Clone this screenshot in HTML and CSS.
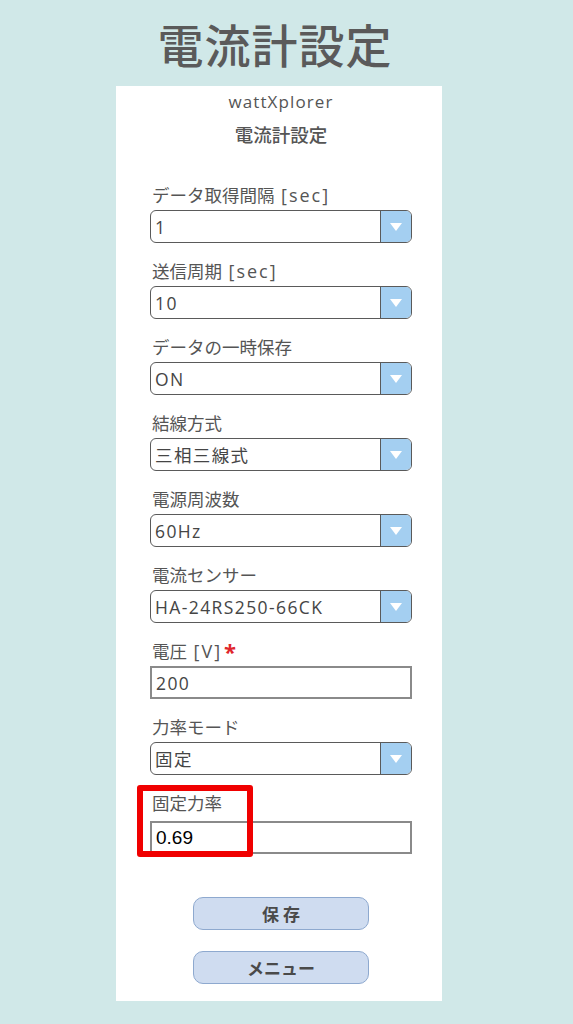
FILE: index.html
```html
<!DOCTYPE html>
<html lang="ja">
<head>
<meta charset="utf-8">
<link rel="stylesheet" href="styles.css">
</head>
<body>
<header class="top">電流計設定</header>
<main class="panel">
  <div class="brand">wattXplorer</div>
  <div class="ptitle">電流計設定</div>
  <form class="form">
    <div class="field">
      <div class="label">データ取得間隔 <span class="lat">[sec]</span></div>
      <div class="select"><span class="val">1</span><span class="arrow"><svg width="12" height="8" viewBox="0 0 12 8"><path d="M0 0H12L6 8Z" fill="#fff"/></svg></span></div>
    </div>
    <div class="field">
      <div class="label">送信周期 <span class="lat">[sec]</span></div>
      <div class="select"><span class="val">10</span><span class="arrow"><svg width="12" height="8" viewBox="0 0 12 8"><path d="M0 0H12L6 8Z" fill="#fff"/></svg></span></div>
    </div>
    <div class="field">
      <div class="label">データの一時保存</div>
      <div class="select"><span class="val">ON</span><span class="arrow"><svg width="12" height="8" viewBox="0 0 12 8"><path d="M0 0H12L6 8Z" fill="#fff"/></svg></span></div>
    </div>
    <div class="field">
      <div class="label">結線方式</div>
      <div class="select"><span class="val">三相三線式</span><span class="arrow"><svg width="12" height="8" viewBox="0 0 12 8"><path d="M0 0H12L6 8Z" fill="#fff"/></svg></span></div>
    </div>
    <div class="field">
      <div class="label">電源周波数</div>
      <div class="select"><span class="val">60Hz</span><span class="arrow"><svg width="12" height="8" viewBox="0 0 12 8"><path d="M0 0H12L6 8Z" fill="#fff"/></svg></span></div>
    </div>
    <div class="field">
      <div class="label">電流センサー</div>
      <div class="select"><span class="val">HA-24RS250-66CK</span><span class="arrow"><svg width="12" height="8" viewBox="0 0 12 8"><path d="M0 0H12L6 8Z" fill="#fff"/></svg></span></div>
    </div>
    <div class="field">
      <div class="label">電圧 <span class="lat">[V]</span><span class="req">*</span></div>
      <div class="input"><span class="val">200</span></div>
    </div>
    <div class="field">
      <div class="label">力率モード</div>
      <div class="select"><span class="val">固定</span><span class="arrow"><svg width="12" height="8" viewBox="0 0 12 8"><path d="M0 0H12L6 8Z" fill="#fff"/></svg></span></div>
    </div>
    <div class="field last">
      <div class="label">固定力率</div>
      <div class="input"><span class="val black">0.69</span></div>
      <div class="highlight"></div>
    </div>
    <div class="buttons">
      <div class="btn">保 存</div>
      <div class="btn">メニュー</div>
    </div>
  </form>
</main>
</body>
</html>
```
FILE: styles.css
```css
html, body {
  margin: 0;
  padding: 0;
}
body {
  background: #d0e8e8;
  width: 573px;
  height: 1024px;
  font-family: "Open Sans", "Noto Sans CJK JP", sans-serif;
  color: #555;
  overflow: hidden;
}
.top {
  height: 86px;
  width: 550px;
  display: flex;
  align-items: center;
  justify-content: center;
  font-family: "Noto Sans CJK JP", sans-serif;
  font-size: 46px;
  font-weight: 500;
  color: #5a5a5a;
  letter-spacing: 1px;
  line-height: 1;
  box-sizing: border-box;
}
.panel {
  margin-left: 116px;
  width: 326px;
  height: 915px;
  background: #fff;
  box-sizing: border-box;
  padding-top: 4px;
}
.brand {
  text-align: center;
  font-size: 17px;
  letter-spacing: 1.1px;
  line-height: 24px;
  height: 24px;
  color: #555;
  padding-left: 4px;
}
.ptitle {
  margin-top: 9px;
  text-align: center;
  font-size: 18.5px;
  line-height: 24px;
  height: 24px;
  color: #555;
  font-weight: 500;
  padding-left: 4px;
}
.form {
  margin: 36px 0 0 34px;
  width: 262px;
  display: flex;
  flex-direction: column;
}
.field {
  display: flex;
  flex-direction: column;
  margin-bottom: 16px;
  position: relative;
}
.label {
  height: 24px;
  line-height: 24px;
  font-size: 17.5px;
  color: #555;
  padding-left: 2px;
  margin-bottom: 3px;
  white-space: nowrap;
}
.lat {
  letter-spacing: 2px;
  font-size: 18px;
  margin-left: 2px;
}
.req {
  color: #e0262b;
  font-weight: 700;
  font-size: 22px;
  margin-left: 2px;
  vertical-align: -2px;
  line-height: 1;
}
.select {
  height: 33px;
  box-sizing: border-box;
  border: 1.5px solid #5a5a5a;
  border-radius: 6px;
  display: flex;
  align-items: stretch;
  overflow: hidden;
}
.val {
  flex: 1;
  display: flex;
  align-items: center;
  padding-left: 4px;
  font-size: 17.5px;
  letter-spacing: 1.4px;
  color: #454545;
  white-space: nowrap;
}
.val.black {
  color: #000;
  font-family: "Liberation Sans", Arial, sans-serif;
  font-size: 19px;
  letter-spacing: 0;
}
.arrow {
  width: 30px;
  background: #a4cff1;
  border-left: 1.5px solid #5a5a5a;
  display: flex;
  align-items: center;
  justify-content: center;
}
.input {
  height: 33px;
  box-sizing: border-box;
  border: 2px solid #8a8a8a;
  display: flex;
  align-items: stretch;
}
.last .label {
  margin-bottom: 6px;
}
.highlight {
  position: absolute;
  left: -13px;
  top: -6px;
  width: 116px;
  height: 72px;
  box-sizing: border-box;
  border: 6px solid #f00000;
  border-radius: 3px;
}
.last {
  margin-bottom: 43px;
}
.buttons {
  display: flex;
  flex-direction: column;
  gap: 21px;
  padding-left: 43px;
}
.btn {
  width: 176px;
  height: 33px;
  box-sizing: border-box;
  background: #cfdcf0;
  border: 1.5px solid #8ea9cf;
  border-radius: 10px;
  display: flex;
  align-items: center;
  justify-content: center;
  font-family: "Noto Sans CJK JP", sans-serif;
  font-weight: 700;
  font-size: 17px;
  color: #4a4a4a;
}
```
